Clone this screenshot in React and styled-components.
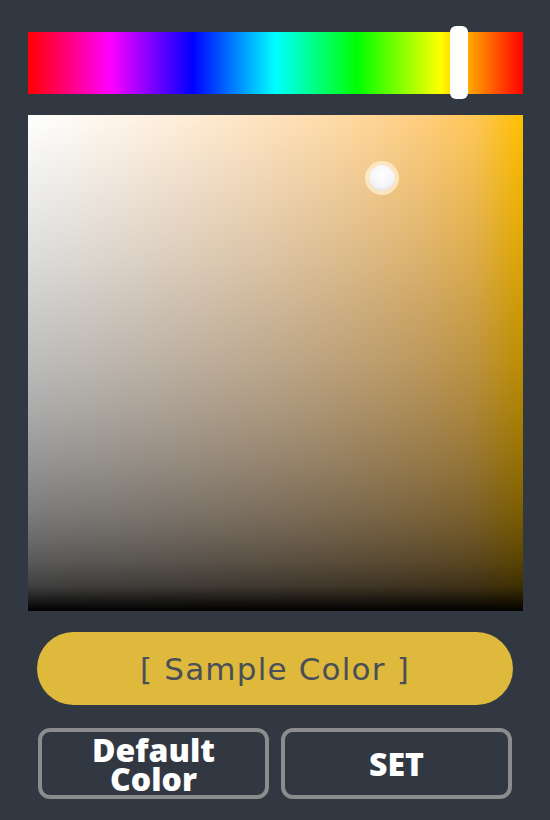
import React from 'react';
import styled, { createGlobalStyle } from 'styled-components';

const HUE_RGB = [255, 191, 0];

// the picker mixes in linear light, so build the stops here
const toLinear = (c) => {
	const v = c / 255;
	return v <= 0.04045 ? v / 12.92 : Math.pow((v + 0.055) / 1.055, 2.4);
};
const toSrgb = (v) => {
	const c = v <= 0.0031308 ? v * 12.92 : 1.055 * Math.pow(v, 1 / 2.4) - 0.055;
	return Math.round(Math.max(0, Math.min(1, c)) * 255);
};

const steps = Array.from({ length: 11 }, (_, i) => i / 10);

const rowStops = steps.map(x => {
	const [r, g, b] = HUE_RGB.map(c => toSrgb((1 - x) + x * toLinear(c)));
	return `rgb(${r},${g},${b}) ${x * 100}%`;
}).join(', ');

const shadeStops = [0, 0.1, 0.2, 0.3, 0.4, 0.5, 0.6, 0.7, 0.8, 0.85, 0.9, 0.95, 1].map(t => {
	const a = 1 - toSrgb(1 - t) / 255;
	return `rgba(0,0,0,${a.toFixed(3)}) ${t * 100}%`;
}).join(', ');

const GlobalStyle = createGlobalStyle`
	html, body {
		margin: 0;
		padding: 0;
		background: #323842;
	}
	#root {
		width: 550px;
		min-height: 820px;
	}
`;

const Panel = styled.div`
	box-sizing: border-box;
	width: 550px;
	height: 820px;
	padding: 32px 27px 0 28px;
	background: #323842;
	display: flex;
	flex-direction: column;
`;

const HueBar = styled.div`
	position: relative;
	height: 62px;
	background: linear-gradient(to right,
		#ff0000 0%,
		#ff00ff 16.6%,
		#0000ff 33.3%,
		#00ffff 50%,
		#00ff00 66.6%,
		#ffff00 83.3%,
		#ff0000 100%);
`;

const HueThumb = styled.div`
	position: absolute;
	top: -6px;
	left: ${p => p.$at}%;
	width: 18px;
	height: 73px;
	margin-left: -9px;
	border-radius: 6px;
	background: #ffffff;
`;

const Field = styled.div`
	position: relative;
	margin-top: 21px;
	height: 496px;
	background:
		linear-gradient(to bottom, ${p => p.$shade}),
		linear-gradient(to right, ${p => p.$row});
`;

const Cursor = styled.div`
	position: absolute;
	left: ${p => p.$x}px;
	top: ${p => p.$y}px;
	width: 26px;
	height: 26px;
	margin: -13px 0 0 -13px;
	border-radius: 50%;
	background: radial-gradient(circle at 50% 35%, #ffffff 0%, #f4f4f4 60%, #d4d4d4 100%);
	box-shadow: 0 0 0 4px rgba(255, 238, 205, 0.8);
`;

const SampleButton = styled.div`
	margin: 21px 10px 0 9px;
	height: 73px;
	border-radius: 37px;
	background: #dfb93c;
	display: flex;
	align-items: center;
	justify-content: center;
	font-family: "DejaVu Sans", sans-serif;
	font-size: 31px;
	letter-spacing: 1.2px;
	color: #4a4f57;
`;

const ButtonRow = styled.div`
	margin: 23px 11px 0 10px;
	display: grid;
	grid-template-columns: 1fr 1fr;
	gap: 12px;
`;

const ActionButton = styled.div`
	box-sizing: border-box;
	height: 71px;
	border: 4px solid #8b8c8e;
	border-radius: 12px;
	background: #323842;
	display: flex;
	align-items: center;
	justify-content: center;
	text-align: center;
	font-family: "Open Sans", sans-serif;
	font-weight: 800;
	font-size: 32px;
	line-height: 29px;
	color: #ffffff;
`;

export default function App() {
	return (
		<>
			<GlobalStyle />
			<Panel>
				<HueBar>
					<HueThumb $at={87} />
				</HueBar>
				<Field $row={rowStops} $shade={shadeStops}>
					<Cursor $x={354} $y={63} />
				</Field>
				<SampleButton>[ Sample Color ]</SampleButton>
				<ButtonRow>
					<ActionButton>Default<br />Color</ActionButton>
					<ActionButton>SET</ActionButton>
				</ButtonRow>
			</Panel>
		</>
	);
}
